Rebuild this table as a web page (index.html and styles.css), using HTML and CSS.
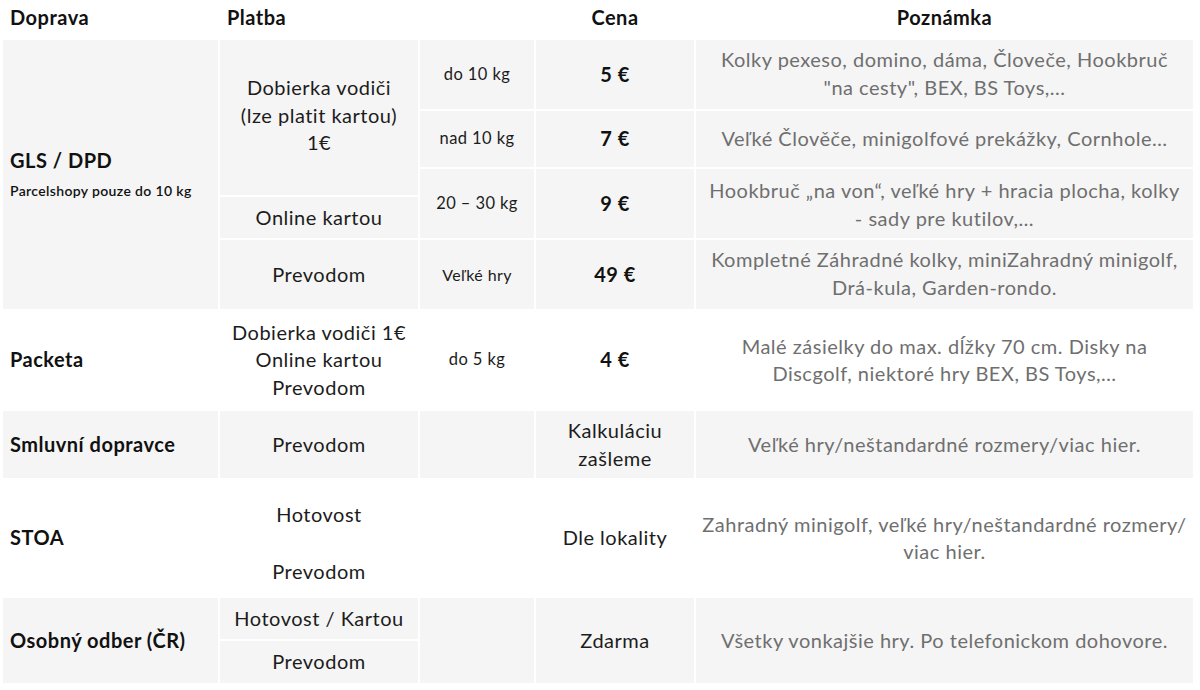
FILE: index.html
```html
<!DOCTYPE html>
<html lang="sk">
<head>
<meta charset="utf-8">
<link rel="stylesheet" href="styles.css">
</head>
<body>
<div class="page">
  <div class="head">
    <div class="hcell left">Doprava</div>
    <div class="hcell left">Platba</div>
    <div class="hcell"></div>
    <div class="hcell">Cena</div>
    <div class="hcell">Poznámka</div>
  </div>
  <div class="table">
    <!-- GLS / DPD -->
    <div class="cell g name span5"><div><b class="carrier">GLS / DPD</b><br><span class="sub">Parcelshopy pouze do 10 kg</span></div></div>
    <div class="cell g pay span3 top"><div>Dobierka vodiči<br>(lze platit kartou)<br>1€</div></div>
    <div class="cell g weight">do 10 kg</div>
    <div class="cell g price">5 €</div>
    <div class="cell g note top"><div>Kolky pexeso, domino, dáma, Človeče, Hookbruč<br>"na cesty", BEX, BS Toys,...</div></div>

    <div class="cell g weight">nad 10 kg</div>
    <div class="cell g price">7 €</div>
    <div class="cell g note">Veľké Člověče, minigolfové prekážky, Cornhole…</div>

    <div class="cell g weight span2">20 – 30 kg</div>
    <div class="cell g price span2">9 €</div>
    <div class="cell g note span2 top"><div>Hookbruč „na von“, veľké hry + hracia plocha, kolky<br>- sady pre kutilov,…</div></div>

    <div class="cell g pay">Online kartou</div>

    <div class="cell g pay">Prevodom</div>
    <div class="cell g weight sm">Veľké hry</div>
    <div class="cell g price">49 €</div>
    <div class="cell g note top"><div>Kompletné Záhradné kolky, miniZahradný minigolf,<br>Drá-kula, Garden-rondo.</div></div>

    <!-- Packeta -->
    <div class="cell name"><b class="carrier">Packeta</b></div>
    <div class="cell pay"><div>Dobierka vodiči 1€<br>Online kartou<br>Prevodom</div></div>
    <div class="cell weight">do 5 kg</div>
    <div class="cell price">4 €</div>
    <div class="cell note"><div>Malé zásielky do max. dĺžky 70 cm. Disky na<br>Discgolf, niektoré hry BEX, BS Toys,…</div></div>

    <!-- Smluvní dopravce -->
    <div class="cell g name"><b class="carrier">Smluvní dopravce</b></div>
    <div class="cell g pay">Prevodom</div>
    <div class="cell g weight"></div>
    <div class="cell g plain"><div>Kalkuláciu<br>zašleme</div></div>
    <div class="cell g note">Veľké hry/neštandardné rozmery/viac hier.</div>

    <!-- STOA -->
    <div class="cell name"><b class="carrier">STOA</b></div>
    <div class="cell pay stoa"><div>Hotovost</div><div>Prevodom</div></div>
    <div class="cell weight"></div>
    <div class="cell plain">Dle lokality</div>
    <div class="cell note"><div>Zahradný minigolf, veľké hry/neštandardné rozmery/<br>viac hier.</div></div>

    <!-- Osobný odber -->
    <div class="cell g name span2"><b class="carrier">Osobný odber (ČR)</b></div>
    <div class="cell g pay">Hotovost / Kartou</div>
    <div class="cell g weight span2"></div>
    <div class="cell g plain span2">Zdarma</div>
    <div class="cell g note span2">Všetky vonkajšie hry. Po telefonickom dohovore.</div>
    <div class="cell g pay">Prevodom</div>
  </div>
</div>
</body>
</html>
```

FILE: styles.css
```css
* { box-sizing: border-box; }

html, body {
  margin: 0;
  padding: 0;
  background: #ffffff;
}

body {
  font-family: Lato, "Noto Sans", "DejaVu Sans", sans-serif;
  color: #1c1c1c;
  font-size: 20px;
  line-height: 27.5px;
  letter-spacing: 0.5px;
}

.page {
  width: 1200px;
  height: 690px;
  padding-left: 3px;
  overflow: hidden;
}

.head,
.table {
  display: grid;
  grid-template-columns: 215px 198px 114px 158px 497px;
  column-gap: 2px;
}

.head {
  height: 40px;
  align-items: center;
}

.hcell {
  font-weight: 700;
  font-size: 20px;
  color: #111;
  text-align: center;
  padding-bottom: 4px;
}

.hcell.left {
  text-align: left;
  padding-left: 7px;
}

.table {
  row-gap: 2px;
  grid-template-rows: 69px 56px 26px 41px 69px 98px 67px 116px 41px 42px;
}

.cell {
  display: flex;
  align-items: center;
  justify-content: center;
  text-align: center;
  background: #ffffff;
  white-space: nowrap;
}

.cell.g { background: #f5f5f5; }

.span2 { grid-row: span 2; }
.span3 { grid-row: span 3; }
.span5 { grid-row: span 5; }

.name {
  justify-content: flex-start;
  text-align: left;
  padding-left: 7px;
}

.carrier {
  font-weight: 700;
  font-size: 20px;
  color: #111;
}

.sub {
  display: inline-block;
  font-size: 14px;
  font-weight: 600;
  line-height: 18px;
  letter-spacing: 0.35px;
  color: #111;
}

.weight {
  font-size: 16.5px;
  letter-spacing: 0.4px;
}

.weight.sm { font-size: 16px; }

.price {
  font-weight: 700;
  font-size: 20px;
  color: #111;
}

.note {
  color: #6f6f6f;
}

.top { align-items: flex-start; }

.pay.top { padding-top: 34px; }
.note.top { padding-top: 6px; }
.note.span2.top { padding-top: 8px; }

.stoa {
  flex-direction: column;
  gap: 30px;
  padding-top: 10px;
}
```
